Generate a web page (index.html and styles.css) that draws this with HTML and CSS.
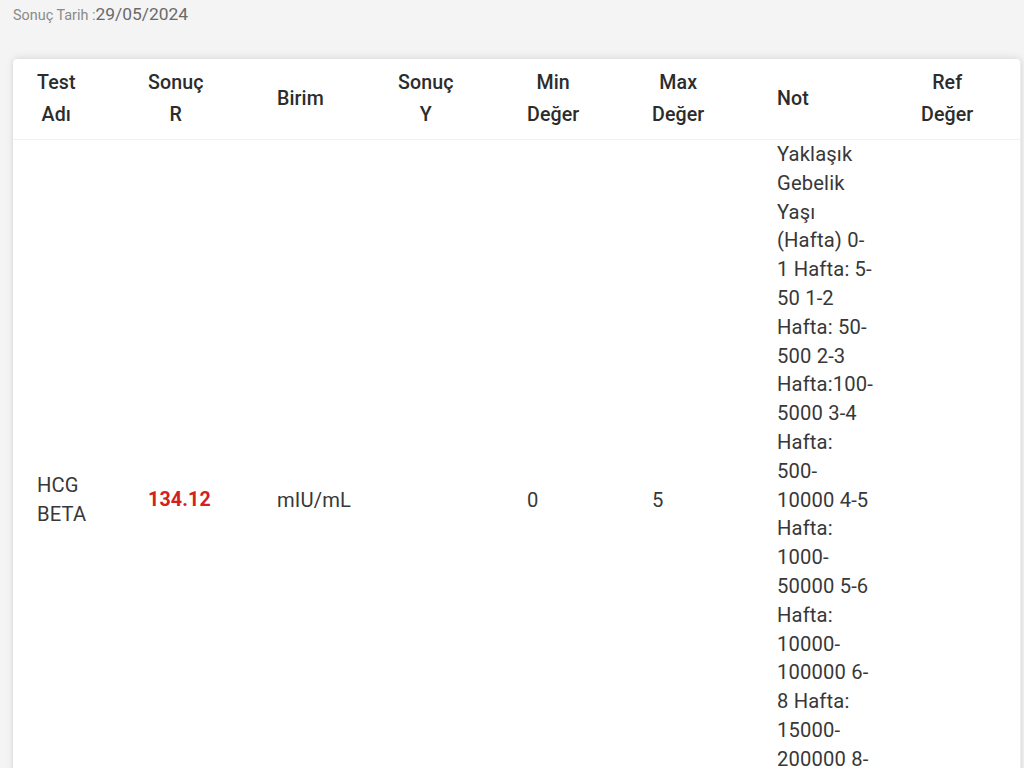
FILE: index.html
```html
<!DOCTYPE html>
<html lang="tr">
<head>
<meta charset="utf-8">
<title>Sonuç</title>
<link rel="stylesheet" href="styles.css">
</head>
<body>
<div class="page">
  <div class="date-line"><span class="date-label">Sonuç Tarih :</span><span class="date-value">29/05/2024</span></div>
  <div class="card">
    <table class="results">
      <colgroup>
        <col class="c1"><col class="c2"><col class="c3"><col class="c4"><col class="c5"><col class="c6"><col class="c7"><col class="c8">
      </colgroup>
      <thead>
        <tr>
          <th><span class="hd">Test<br>Adı</span></th>
          <th><span class="hd">Sonuç<br>R</span></th>
          <th><span class="hd">Birim</span></th>
          <th><span class="hd">Sonuç<br>Y</span></th>
          <th><span class="hd">Min<br>Değer</span></th>
          <th><span class="hd">Max<br>Değer</span></th>
          <th><span class="hd">Not</span></th>
          <th><span class="hd">Ref<br>Değer</span></th>
        </tr>
      </thead>
      <tbody>
        <tr>
          <td>HCG<br>BETA</td>
          <td class="high">134.12</td>
          <td>mIU/mL</td>
          <td></td>
          <td>0</td>
          <td>5</td>
          <td class="note">Yaklaşık<br>Gebelik<br>Yaşı<br>(Hafta) 0-<br>1 Hafta: 5-<br>50 1-2<br>Hafta: 50-<br>500 2-3<br>Hafta:100-<br>5000 3-4<br>Hafta:<br>500-<br>10000 4-5<br>Hafta:<br>1000-<br>50000 5-6<br>Hafta:<br>10000-<br>100000 6-<br>8 Hafta:<br>15000-<br>200000 8-<br>12 Hafta:<br>10000-<br>250000</td>
          <td></td>
        </tr>
      </tbody>
    </table>
  </div>
</div>
</body>
</html>
```
FILE: styles.css
```css
html, body {
  margin: 0;
  padding: 0;
  background: #f4f4f4;
  font-family: Roboto, "Noto Sans", "Liberation Sans", sans-serif;
}

.page {
  padding: 3px 3px 0 13px;
}

.date-line {
  height: 56px;
  line-height: 22px;
}

.date-label {
  font-size: 14.4px;
  color: #8a8a8a;
}

.date-value {
  font-size: 17.4px;
  color: #6a6a6a;
}

.card {
  background: #ffffff;
  border-radius: 4px 4px 0 0;
  box-shadow: 0 -2px 8px rgba(0, 0, 0, 0.08), 0 1px 4px rgba(0, 0, 0, 0.08);
  border-right: 1px solid #ececec;
}

.results {
  border-collapse: collapse;
  table-layout: fixed;
  width: 1008px;
  font-size: 19.6px;
}

.c1 { width: 135px; }
.c2 { width: 129px; }
.c3 { width: 121px; }
.c4 { width: 129px; }
.c5 { width: 125px; }
.c6 { width: 125px; }
.c7 { width: 144px; }
.c8 { width: 100px; }

.results th {
  height: 80px;
  padding: 0;
  text-align: left;
  vertical-align: middle;
  font-weight: 500;
  color: #2c2c2c;
  line-height: 32px;
  letter-spacing: 0.1px;
  border-bottom: 1px solid #f0f0f0;
}

.results th:first-child,
.results td:first-child {
  padding-left: 24px;
}

.hd {
  display: inline-block;
  text-align: center;
}

.results td {
  padding: 0;
  vertical-align: middle;
  color: #383838;
  font-size: 20.2px;
  letter-spacing: 0.15px;
  line-height: 28.8px;
  text-align: left;
}

.results td.high {
  color: #d32020;
  font-weight: 700;
  font-size: 19.6px;
}

.results td.note {
  white-space: nowrap;
}
```
